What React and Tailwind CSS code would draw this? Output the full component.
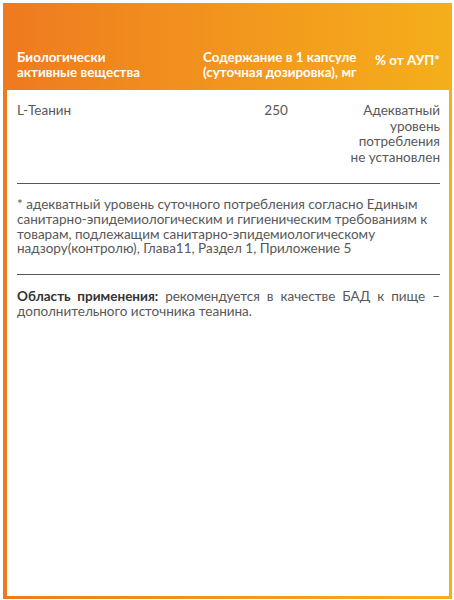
import React from 'react';

const App = () => {
    return (
        <div className="w-[454px] h-[600px] bg-white p-[3px] pb-[1px] pr-[2px]" style={{ fontFamily: 'Lato, "Open Sans", sans-serif' }}>
            <div className="h-full bg-gradient-to-r from-[#ee7a1f] to-[#f5af1b] px-[4px] pb-[3px] pr-[3px] flex flex-col">
                {/* Header */}
                <div className="h-[87px] flex items-end pb-[10px] pl-[10px] pr-[9px] text-white font-bold text-[13.4px] leading-[15px]">
                    <div className="w-[186px]">Биологически<br />активные вещества</div>
                    <div className="w-[168px] whitespace-nowrap">Содержание в 1 капсуле<br />(суточная дозировка), мг</div>
                    <div className="flex-1 text-right self-start mt-[50px] whitespace-nowrap">% от АУП*</div>
                </div>

                {/* Body */}
                <div className="flex-1 bg-white px-[10px] pr-[9px] text-[#585858] text-[13.5px]">
                    <div className="flex pt-[13px] pb-[18px] leading-[15.5px] border-b-[1.5px] border-[#555]">
                        <div className="w-[186px]">L-Теанин</div>
                        <div className="w-[150px] text-center">250</div>
                        <div className="flex-1 text-right whitespace-nowrap">Адекватный<br />уровень<br />потребления<br />не установлен</div>
                    </div>

                    <div className="pt-[13px] pb-[18px] leading-[14.8px] border-b-[1.5px] border-[#555]">
                        * адекватный уровень суточного потребления согласно Единым санитарно-эпидемиологическим и гигиеническим требованиям к товарам, подлежащим санитарно-эпидемиологическому надзору(контролю), Глава11, Раздел 1, Приложение 5
                    </div>

                    <p className="pt-[14px] leading-[14.8px] text-justify">
                        <span className="font-bold text-[#333]">Область применения:</span> рекомендуется в качестве БАД к пище – дополнительного источника теанина.
                    </p>
                </div>
            </div>
        </div>
    );
};

export default App;
